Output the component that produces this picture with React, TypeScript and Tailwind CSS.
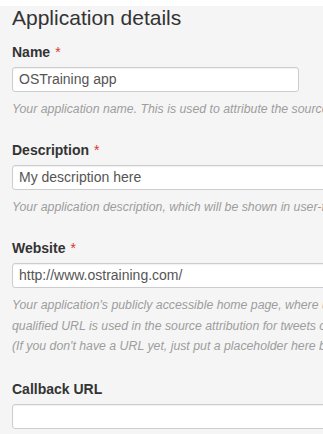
import { FC } from 'react'

type FieldProps = {
    label: string
    required?: boolean
    value: string
    inputWidth: string
    help: string[]
    className?: string
}

const Field: FC<FieldProps> = ({ label, required, value, inputWidth, help, className }) => (
    <div className={className}>
        <div className="text-[14px] leading-[20px] font-bold text-[#333]">
            {label}
            {required && <span className="font-normal text-[#d33] ml-[5px]">*</span>}
        </div>
        <div className={`mt-[5px] h-[25px] ${inputWidth} flex items-center bg-white border border-[#cdcdcd] rounded-[3px] px-[6px] text-[14px] text-[#555] shadow-[inset_0_1px_1px_rgba(0,0,0,0.06)]`}>
            {value}
        </div>
        <div className="mt-[7px] text-[12.3px] leading-[20.5px] italic text-[#9d9d9d]">
            {help.map((line, i) => (
                <div key={i} className="whitespace-nowrap">{line}</div>
            ))}
        </div>
    </div>
)

const App: FC = () => {
    return (
        <div className="w-[323px] h-[434px] overflow-hidden bg-white font-['Liberation_Sans',Arial,sans-serif]">
            <div className="h-[6px] bg-white" />
            <div className="h-[428px] bg-[#f5f5f5] px-[12px]">
                <h2 className="text-[21px] leading-[24px] text-[#333]">Application details</h2>

                <Field
                    className="mt-[12px]"
                    label="Name"
                    required
                    value="OSTraining app"
                    inputWidth="w-[287px]"
                    help={['Your application name. This is used to attribute the source of a tweet and in user-facing authorization screens. 32 characters max.']}
                />

                <Field
                    className="mt-[20px]"
                    label="Description"
                    required
                    value="My description here"
                    inputWidth="w-[560px]"
                    help={['Your application description, which will be shown in user-facing authorization screens. Between 10 and 200 characters max.']}
                />

                <Field
                    className="mt-[21px]"
                    label="Website"
                    required
                    value="http://www.ostraining.com/"
                    inputWidth="w-[560px]"
                    help={[
                        "Your application's publicly accessible home page, where users can go to download, make use of, or find out more information about your application. This fully-",
                        'qualified URL is used in the source attribution for tweets created by your application and will be shown in user-facing authorization screens.',
                        "(If you don't have a URL yet, just put a placeholder here but remember to change it later.)",
                    ]}
                />

                <Field
                    className="mt-[22px]"
                    label="Callback URL"
                    value=""
                    inputWidth="w-[560px]"
                    help={[]}
                />
            </div>
        </div>
    )
}

export default App
